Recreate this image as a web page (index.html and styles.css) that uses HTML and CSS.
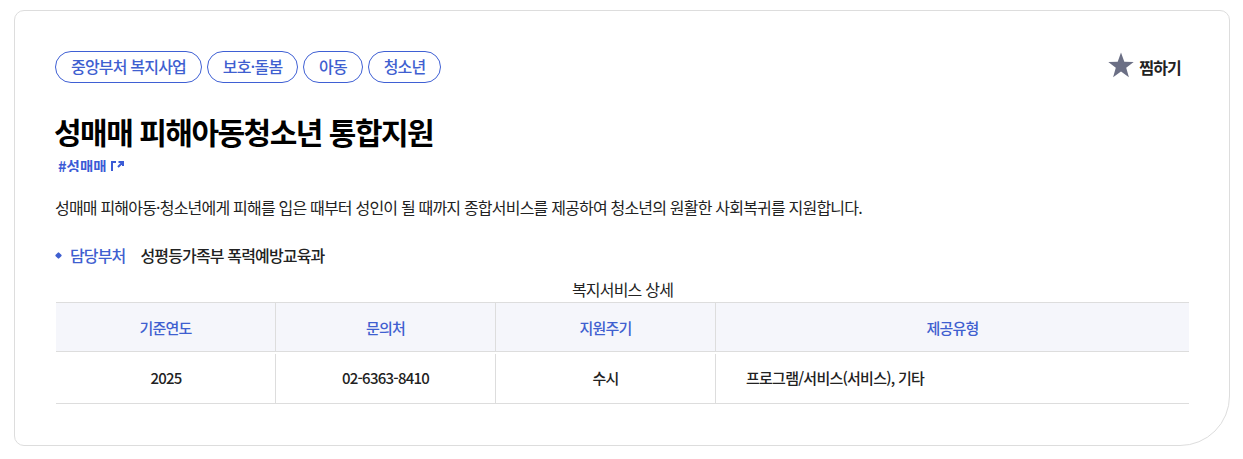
FILE: index.html
```html
<!DOCTYPE html>
<html lang="ko">
<head>
  <meta charset="UTF-8">
  <title>성매매 피해아동청소년 통합지원</title>
  <link rel="stylesheet" href="styles.css">
</head>
<body>

  <div class="card">
    <div class="top-row">
      <div class="chips">
        <span class="chip">중앙부처 복지사업</span>
        <span class="chip">보호·돌봄</span>
        <span class="chip">아동</span>
        <span class="chip">청소년</span>
      </div>
      <div class="bookmark">
        <svg class="star" width="26" height="26" viewBox="0 0 26 26"><path d="M13 0.5l3.3 9.2 9.4 0.2-7.5 5.8 2.7 9.5-7.9-5.6-7.9 5.6 2.7-9.5-7.5-5.8 9.4-0.2z"/></svg>
        <span>찜하기</span>
      </div>
    </div>

    <h2 class="title">성매매 피해아동청소년 통합지원</h2>
    <div class="hash-row">
      <a class="hash">#성매매</a>
      <svg class="out-icon" width="13" height="10" viewBox="0 0 13 10"><path d="M5 1H1V10M7.5 1H12V5M12 1L7 6" fill="none" stroke="#3b5bd6" stroke-width="2"/></svg>
    </div>

    <p class="desc">성매매 피해아동·청소년에게 피해를 입은 때부터 성인이 될 때까지 종합서비스를 제공하여 청소년의 원활한 사회복귀를 지원합니다.</p>

    <div class="dept">
      <span class="dot"></span>
      <span class="dept-label">담당부처</span>
      <span class="dept-name">성평등가족부 폭력예방교육과</span>
    </div>

    <table class="detail">
      <caption>복지서비스 상세</caption>
      <thead>
        <tr>
          <th class="col-a">기준연도</th>
          <th class="col-a">문의처</th>
          <th class="col-a">지원주기</th>
          <th>제공유형</th>
        </tr>
      </thead>
      <tbody>
        <tr>
          <td>2025</td>
          <td>02-6363-8410</td>
          <td>수시</td>
          <td class="left">프로그램/서비스(서비스), 기타</td>
        </tr>
      </tbody>
    </table>
  </div>

</body>
</html>
```

FILE: styles.css
```css
body {
  margin: 0;
  padding: 10px 13px 0 14px;
  background: #fff;
  font-family: "Noto Sans CJK KR", "Noto Sans", sans-serif;
  color: #111;
}

.card {
  height: 436px;
  box-sizing: border-box;
  padding: 40px 40px 0 40px;
  border: 1px solid #ddd;
  border-radius: 10px 10px 50px 10px;
}

.top-row {
  display: flex;
  justify-content: space-between;
  align-items: center;
  height: 32px;
}

.chips {
  display: flex;
  gap: 4.7px;
}

.chip {
  height: 32px;
  line-height: 29px;
  box-sizing: border-box;
  padding: 0 15px;
  border: 1px solid #3f60d4;
  border-radius: 16px;
  font-size: 16px;
  font-weight: 500;
  letter-spacing: -0.8px;
  color: #3f5fd0;
}

.bookmark {
  display: flex;
  align-items: center;
  gap: 5px;
  margin-right: 8px;
  font-size: 16px;
  font-weight: 700;
  letter-spacing: -0.8px;
  color: #222;
}

.star {
  margin-bottom: 5px;
  fill: #6b6f85;
}

.title {
  margin: 27px 0 0 -1px;
  height: 42px;
  line-height: 42px;
  font-size: 30px;
  font-weight: 700;
  letter-spacing: -1.5px;
  color: #000;
}

.hash-row {
  display: flex;
  align-items: flex-start;
  gap: 4px;
  height: 12px;
  margin: 8px 0 0 3px;
  overflow: hidden;
}

.hash {
  font-size: 14.5px;
  line-height: 12px;
  font-weight: 700;
  letter-spacing: 0;
  color: #3b5bd6;
}

.out-icon {
  flex: none;
  margin-top: 1px;
}

.desc {
  margin: 23px 0 0;
  height: 24px;
  line-height: 24px;
  font-size: 16px;
  letter-spacing: -0.8px;
  color: #222;
}

.dept {
  display: flex;
  align-items: center;
  height: 24px;
  margin: 24px 0 0 1px;
  font-size: 16px;
  font-weight: 500;
  letter-spacing: -0.85px;
}

.dot {
  width: 5px;
  height: 5px;
  margin-right: 9px;
  background: #3f5fd0;
  border-radius: 1px;
  transform: rotate(45deg);
}

.dept-label {
  margin-right: 15px;
  color: #3f5fd0;
}

.dept-name {
  color: #222;
}

.detail {
  width: 1133px;
  margin: 10px 0 0 1px;
  border-collapse: separate;
  border-spacing: 0;
  table-layout: fixed;
  font-size: 15px;
  letter-spacing: -0.75px;
}

.detail caption {
  height: 25px;
  line-height: 24px;
  font-size: 16px;
  letter-spacing: -0.8px;
  color: #222;
}

.detail th {
  height: 48px;
  padding: 0;
  background: #f5f6fb;
  border-top: 1px solid #ddd;
  border-bottom: 1px solid #ddd;
  border-left: 1px solid #ddd;
  font-weight: 500;
  color: #3f5fd0;
}

.detail th:first-child {
  border-left: 0;
}

.detail .col-a {
  width: 219px;
}

.detail td {
  height: 51px;
  padding: 0 0 0 1px;
  border-bottom: 1px solid #ddd;
  background: linear-gradient(#ddd, #ddd) 0 2px / 1px 100% no-repeat;
  text-align: center;
  font-weight: 500;
  color: #222;
}

.detail td:first-child {
  background: none;
}

.detail td.left {
  padding-left: 31px;
  text-align: left;
}
```
